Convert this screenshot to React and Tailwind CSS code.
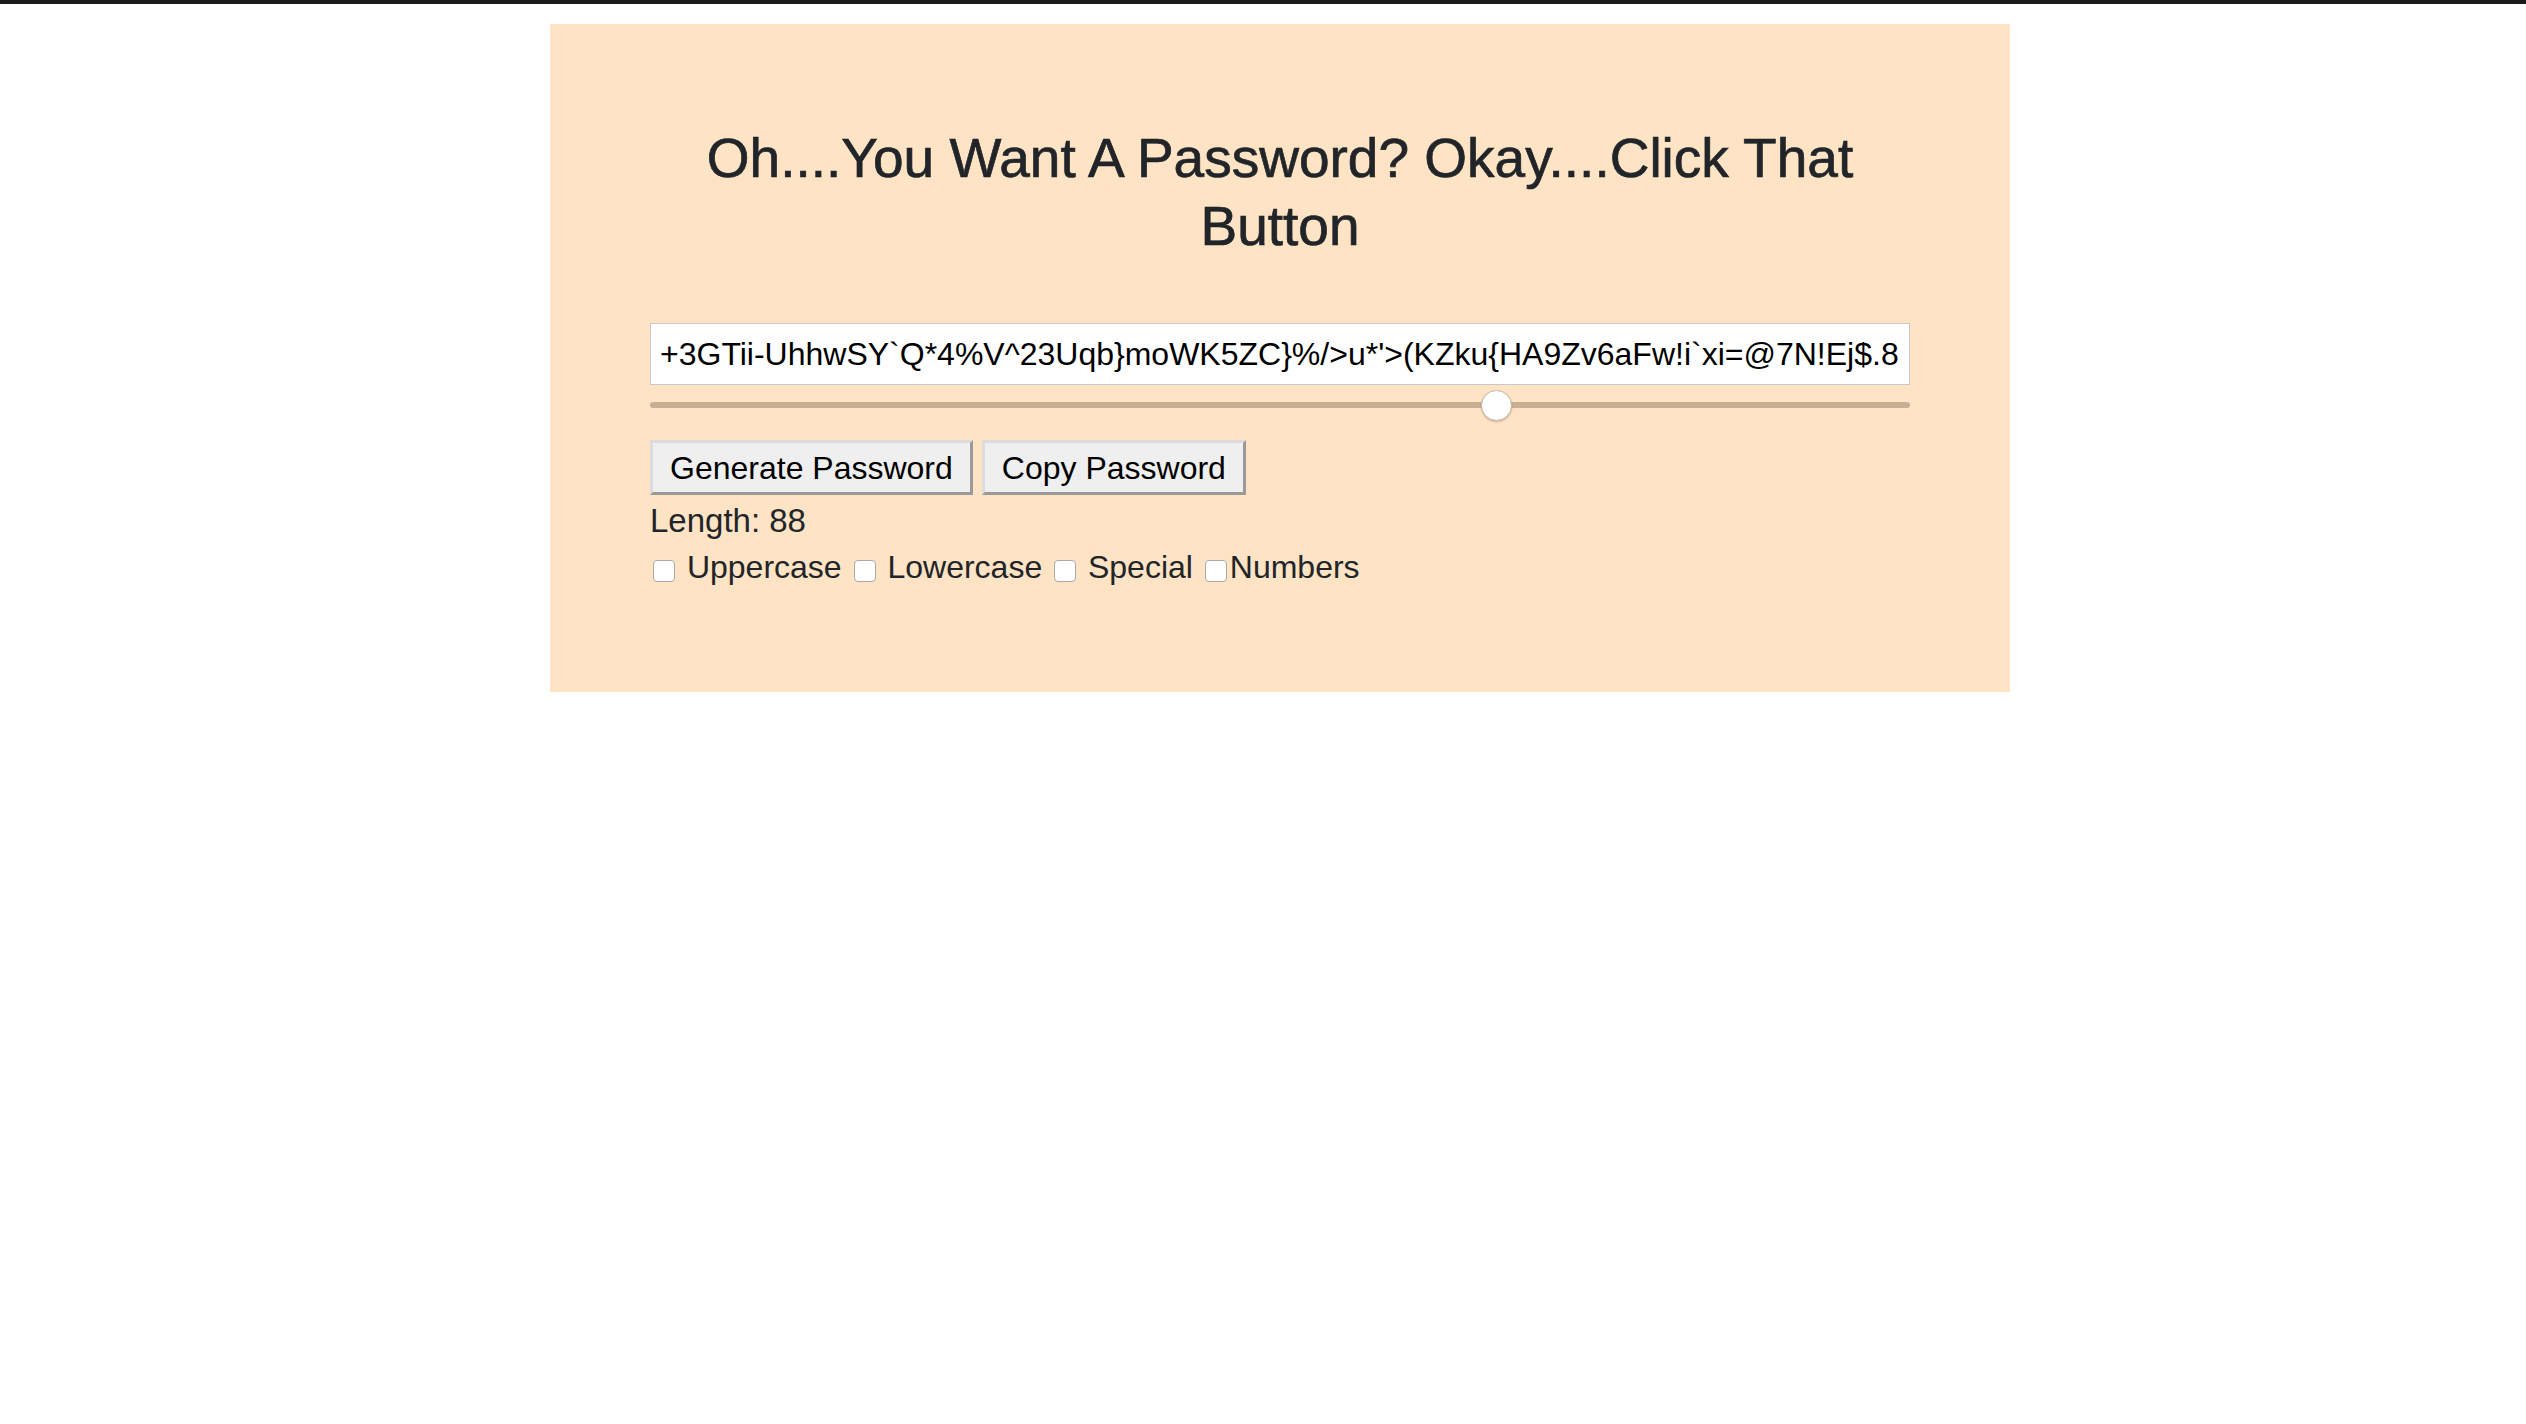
import React from "react";

const PASSWORD =
  "+3GTii-UhhwSY`Q*4%V^23Uqb}moWK5ZC}%/>u*'>(KZku{HA9Zv6aFw!i`xi=@7N!Ej$.8rT#q2Lz&Pm0^sWd]c";

function Box() {
  return (
    <input
      type="checkbox"
      readOnly
      className="appearance-none w-[22px] h-[22px] rounded-[4px] border border-[#a9a9a9] bg-white align-[-4px] ml-[3px] mr-[3px]"
    />
  );
}

const btn =
  "h-[55px] px-[17px] border-[3px] border-t-[#dcdcdc] border-l-[#dcdcdc] border-b-[#9a9a9a] border-r-[#9a9a9a] bg-[#efefef] text-[32px] leading-none text-black";

export default function App() {
  return (
    <div className="min-h-screen bg-white font-['Liberation_Sans',Arial,sans-serif]">
      <div className="h-[4px] bg-[#1c1c1c]" />
      <div className="ml-[550px] mt-[20px] w-[1460px] bg-[#fee3c4] px-[100px] pt-[100px] pb-[102px]">
        <h1 className="text-center text-[55px] leading-[68px] font-medium text-[#212529] [-webkit-text-stroke:0.7px_#212529]">
          Oh....You Want A Password? Okay....Click That Button
        </h1>
        <input
          type="text"
          readOnly
          value={PASSWORD}
          className="mt-[63px] block w-full h-[62px] border border-[#c8c8c8] bg-white px-[9px] text-[32px] text-black outline-none"
        />
        <div className="pt-[17px]">
          <div className="relative h-[6px] rounded-full bg-[#c8b096]">
            <div className="absolute left-[831px] top-[-12px] w-[31px] h-[31px] rounded-full bg-white border border-[#c9b8a6] shadow-[0_1px_2px_rgba(0,0,0,0.2)]" />
          </div>
        </div>
        <div className="mt-[32px] flex gap-[9px]">
          <button className={btn}>Generate Password</button>
          <button className={btn}>Copy Password</button>
        </div>
        <div className="mt-[3px] text-[33px] leading-[46px] text-[#212529]">
          Length: 88
        </div>
        <div className="text-[32px] leading-[46px] text-[#212529] whitespace-nowrap">
          <Box />
          {" "}Uppercase{" "}
          <Box />
          {" "}Lowercase{" "}
          <Box />
          {" "}Special{" "}
          <Box />
          Numbers
        </div>
      </div>
    </div>
  );
}
